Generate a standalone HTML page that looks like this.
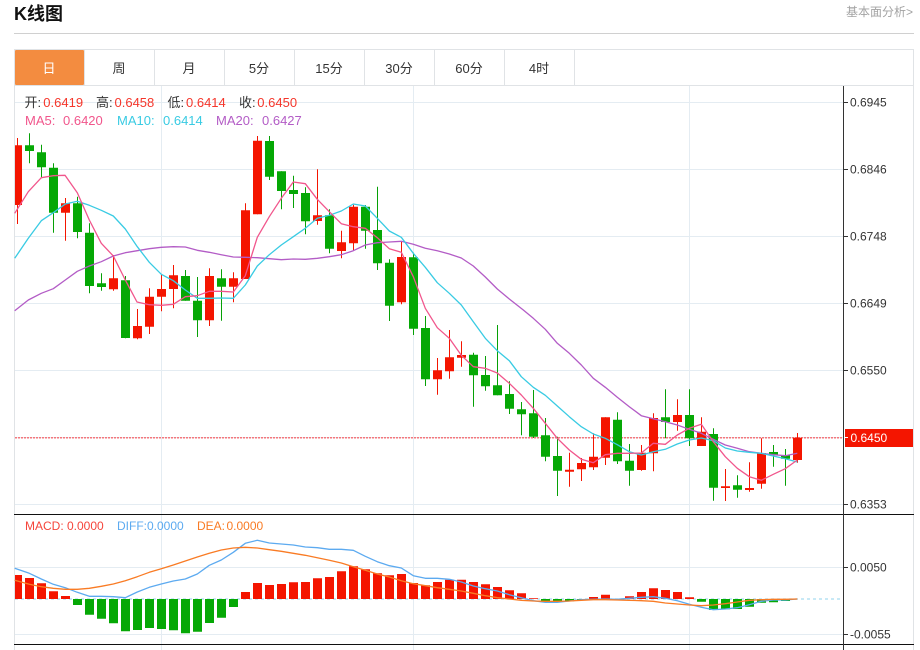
<!DOCTYPE html>
<html lang="zh">
<head>
<meta charset="utf-8">
<title>K线图</title>
<style>
html,body{margin:0;padding:0;background:#fff;width:920px;height:650px;overflow:hidden}
svg{display:block}
text{font-family:"Liberation Sans","Noto Sans CJK SC",sans-serif}
</style>
</head>
<body>
<svg width="920" height="650" viewBox="0 0 920 650" xmlns="http://www.w3.org/2000/svg">
<rect width="920" height="650" fill="#fff"/>
<!-- header -->
<text x="14" y="20" font-size="18" font-weight="bold" fill="#111">K线图</text>
<text x="846" y="16" font-size="12" fill="#a3a3a3">基本面分析&gt;</text>
<path d="M14 33.500H914" stroke="#d0d0d0" stroke-width="1"/>
<!-- frame -->
<path d="M14.500 50V650M913.500 50V650M14 49.500H914M14 85.500H914" stroke="#e0e3e6" stroke-width="1" fill="none"/>
<!-- tabs -->
<rect x="15" y="50" width="69" height="35" rx="1" fill="#f38c40"/>
<path d="M84.500 50V85M154.500 50V85M224.500 50V85M294.500 50V85M364.500 50V85M434.500 50V85M504.500 50V85M574.500 50V85" stroke="#e0e3e6" stroke-width="1"/>
<g font-size="13" text-anchor="middle" fill="#333">
<text x="49" y="73" fill="#fff">日</text>
<text x="119" y="73">周</text>
<text x="189" y="73">月</text>
<text x="259" y="73">5分</text>
<text x="329" y="73">15分</text>
<text x="399" y="73">30分</text>
<text x="469" y="73">60分</text>
<text x="539" y="73">4时</text>
</g>
<!-- grid -->
<path d="M15 102.500H843M15 169.500H843M15 236.500H843M15 303.500H843M15 370.500H843M15 437.500H843M15 504.500H843M15 567.500H843M15 634.500H843M161.500 86V650M413.500 86V650M689.500 86V650" stroke="#e4ecf2" stroke-width="1" fill="none"/>
<!-- price line -->
<path d="M15 437.700H843" stroke="#f4777c" stroke-width="1.500" stroke-dasharray="2 1" fill="none"/>
<!-- wicks -->
<path fill="none" stroke="#f41500" stroke-width="1" d="M17.500 138V224M65.500 198V240.700M113.500 255V290.700M137.500 309V339.300M149.500 288.300V334M161.500 275V311.300M173.500 265V308.300M209.500 268.300V326M233.500 272.300V302.300M245.500 203.300V279M257.500 136V214.300M317.500 169.300V224.700M341.500 230.700V258.300M353.500 204.700V250.700M401.500 241.700V304.300M437.500 358V394.700M449.500 330V378.700M461.500 341.300V366.700M569.500 452.700V486.700M581.500 458V481M593.500 433.300V470M605.500 417.300V465M641.500 445V470.700M653.500 413.300V471.300M677.500 399.300V430.700M701.500 417.300V446M725.500 469V501M749.500 462.300V491.700M761.500 438.300V488.700M797.500 433V462.700"/>
<path fill="none" stroke="#06a106" stroke-width="1" d="M29.500 133.300V163.300M41.500 144.700V177M53.500 163.300V232.700M77.500 196.700V238.300M89.500 223.300V293.300M101.500 273.300V290.700M125.500 276V338.300M185.500 270V300.700M197.500 277V337M221.500 269.300V320.700M269.500 136V180M281.500 171.300V209.300M293.500 175.700V208M305.500 187.300V234.300M329.500 209.300V253.300M365.500 205V248.700M377.500 186.700V270M389.500 259.300V321M413.500 252.700V335M425.500 316V386M473.500 352.700V406.700M485.500 356V390.700M497.500 325V395.300M509.500 381.300V414M521.500 402V435.300M533.500 390V438M545.500 418V461.300M557.500 436.700V496M617.500 412.300V464M629.500 444V485.700M665.500 389.300V438.300M689.500 389.300V446M713.500 428.300V500.700M737.500 475.300V497.700M773.500 445V466.700M785.500 449V485.700"/>
<!-- bodies -->
<path fill="#f41500" d="M15 145.300H22V205H15zM61 203.300h9V212.700h-9zM109 278.300h9V289.300h-9zM133 326h9V338.300h-9zM145 296.700h9V326.700h-9zM157 289h9V296.700h-9zM169 275.300h9V289h-9zM205 276h9V320.300h-9zM229 278.300h9V286.700h-9zM241 210.300h9V279h-9zM253 140.700h9V214.300h-9zM313 215.300h9V221h-9zM337 242.300h9V251h-9zM349 206.700h9V243.300h-9zM397 257h9V302.300h-9zM433 370.300h9V379.300h-9zM445 357.300h9V371.300h-9zM457 355h9V357.700h-9zM565 469.700h9V471.700h-9zM577 463h9V469.300h-9zM589 456.700h9V467.300h-9zM601 417.300h9V457.700h-9zM637 452.700h9V470h-9zM649 418h9V453.300h-9zM673 415h9V422h-9zM697 431.700h9V446h-9zM721 486.300h9V488h-9zM745 488h9V490h-9zM757 453h9V483.700h-9zM793 437.700h9V460h-9z"/>
<path fill="#05a805" d="M25 145.300h9V151h-9zM37 152.300h9V167.300h-9zM49 167.700h9V212.700h-9zM73 203.300h9V232h-9zM85 232.700h9V286h-9zM97 283.300h9V287h-9zM121 280.300h9V338h-9zM181 276h9V300.700h-9zM193 300.700h9V320.300h-9zM217 278.300h9V286.700h-9zM265 141h9V176.700h-9zM277 171.300h9V191h-9zM289 190h9V194h-9zM301 193h9V221.300h-9zM325 215.300h9V248.700h-9zM361 206.700h9V230.700h-9zM373 230h9V263.300h-9zM385 262.700h9V305.700h-9zM409 257.300h9V328.700h-9zM421 328h9V379.300h-9zM469 354.700h9V375.300h-9zM481 375h9V386.300h-9zM493 385.300h9V395.300h-9zM505 394h9V408.700h-9zM517 409.300h9V414.300h-9zM529 413.300h9V436.700h-9zM541 435.300h9V456.700h-9zM553 456h9V470.700h-9zM613 419.700h9V461.300h-9zM625 460.700h9V470.700h-9zM661 417.300h9V422h-9zM685 415h9V438.300h-9zM709 434h9V487.700h-9zM733 485.300h9V489.700h-9zM769 452h9V455h-9zM781 455h9V458.700h-9z"/>
<!-- MA lines -->
<g fill="none" stroke-width="1.300" stroke-linejoin="round">
<polyline stroke="#b35cc6" points="14.700,310.700 28.300,300 41.300,293.300 53.300,288.700 65.300,280 77.300,271.300 89.300,266 101.300,261.700 113.300,256 125.300,252.700 137.300,250.700 149.300,248.700 161.300,247.300 173.300,246.700 185.300,247 197.300,250.300 209.300,252.300 221.300,254.700 233.300,257 245.300,257.300 257.300,257.700 269.300,258.700 281.300,259.700 293.300,259 305.300,259.300 317.300,258.300 329.300,256.700 341.300,254.700 353.300,250.700 365.300,245 377.300,242.700 389.300,242 401.300,241.300 413.300,244.300 425.300,248.300 437.300,250.700 449.300,254 461.300,258 473.300,266 485.300,277 497.300,289 509.300,299 523.300,310 533.300,318.300 545.300,329.300 557.300,343.300 569.300,353.300 581.300,365 593.300,378.300 605.300,387.300 617.300,397.300 629.300,406.700 641.300,415.700 653.300,418.700 665.300,421.700 677.300,425 689.300,429.300 701.300,433.300 713.300,439.300 725.300,445 737.300,448.300 749.300,451.700 761.300,453.300 773.300,454.700 785.300,455.700 797.300,453.300"/>
<polyline stroke="#39cbe3" points="14.700,258.300 28.300,238.300 41.300,220.700 53.300,212.700 65.300,204 77.300,201.300 89.300,205.300 101.300,210.300 113.300,216 125.300,229 137.300,246.700 149.300,262.300 161.300,274.300 173.300,280.700 185.300,290 197.300,298.300 209.300,298.300 221.300,298 233.300,298.300 245.300,285 257.300,266 269.300,254.700 281.300,245 293.300,236.700 305.300,228.300 317.300,218.300 329.300,215.300 341.300,211 353.300,204 365.300,206 377.300,218.300 389.300,231 401.300,237.300 413.300,253.300 425.300,267.300 437.300,282.700 449.300,293.300 461.300,305 473.300,321.700 485.300,338.300 497.300,350.700 509.300,360.700 521.300,376.700 533.300,387.300 545.300,395.300 557.300,406 569.300,416.700 581.300,426.700 593.300,434 605.300,438.300 617.300,444.700 629.300,451.700 641.300,455 653.300,451.700 665.300,449.300 677.300,444 689.300,440 701.300,438 713.300,440.700 725.300,448 737.300,451 749.300,452.300 761.300,453.300 773.300,456 785.300,458.700 797.300,462"/>
<polyline stroke="#f1568c" points="14.700,213.300 28.300,191.700 41.300,177.700 53.300,175.700 65,175.300 77.300,192.700 89.300,220 101.300,243.300 113.300,256 125.300,280 137,302 149.300,304.700 161.300,305.300 173.300,304.300 185.300,296.700 197.300,295.700 209.300,291.300 221.300,291.300 233.300,292 245.300,275.700 257.300,237.300 269.300,216.700 281.300,198.300 293.300,182 305.300,183.700 317.300,199.300 329.300,211.700 341.300,223.700 353.300,226.700 365.300,228.300 377.300,237.700 389.300,248.700 401.300,252.300 413.300,276.700 425.300,308.300 437.300,327.700 449.300,338.300 461.300,355.300 473.300,366.700 485.300,368.300 497.300,373 509.300,383.300 521.300,395 533.300,408.300 545.300,423.300 557.300,438.300 569.300,450 581.300,459.300 593.300,462.700 605.300,454.700 617.300,453.300 629.300,453.300 641.300,453 653.300,443.300 665.300,444.300 677.300,435 689.300,428.300 701.300,424.300 713.300,441.700 725.300,456.700 737.300,468.300 749.300,476.700 761.300,480.300 773.300,474.300 785.300,468.700 797.300,460"/>
</g>
<!-- legends -->
<g font-size="13">
<text x="24.500" y="107" fill="#333">开:</text><text x="43.300" y="107" fill="#f5362b">0.6419</text>
<text x="96" y="107" fill="#333">高:</text><text x="114.500" y="107" fill="#f5362b">0.6458</text>
<text x="167.500" y="107" fill="#333">低:</text><text x="186" y="107" fill="#f5362b">0.6414</text>
<text x="239" y="107" fill="#333">收:</text><text x="257.300" y="107" fill="#f5362b">0.6450</text>
<text x="25" y="125" fill="#f1568c">MA5:</text><text x="63" y="125" fill="#f1568c">0.6420</text>
<text x="117" y="125" fill="#39cbe3">MA10:</text><text x="163" y="125" fill="#39cbe3">0.6414</text>
<text x="216" y="125" fill="#b35cc6">MA20:</text><text x="262" y="125" fill="#b35cc6">0.6427</text>
</g>
<!-- axis -->
<path d="M14 514.500H914M14 644.500H914" stroke="#111" stroke-width="1"/>
<path d="M843.500 86V650" stroke="#333" stroke-width="1"/>
<path d="M844 102.500h4M844 169.500h4M844 236.500h4M844 303.500h4M844 370.500h4M844 504.500h4M844 567.500h4M844 634.500h4" stroke="#333" stroke-width="1"/>
<g font-size="12" fill="#333">
<text x="850" y="106.500">0.6945</text>
<text x="850" y="173.500">0.6846</text>
<text x="850" y="240.500">0.6748</text>
<text x="850" y="307.500">0.6649</text>
<text x="850" y="374.500">0.6550</text>
<text x="850" y="508.500">0.6353</text>
<text x="850" y="571.500">0.0050</text>
<text x="850" y="638.500">-0.0055</text>
</g>
<rect x="845" y="429" width="68" height="18" fill="#f41500"/>
<path d="M844 437.500h4" stroke="#fff" stroke-width="1"/>
<text x="850.500" y="442" font-size="12" fill="#fff">0.6450</text>
<!-- MACD -->
<path d="M15 599H843" stroke="#a8dcf0" stroke-width="1.300" stroke-dasharray="3 3" fill="none"/>
<path fill="#f41500" d="M15 575H22V599H15zM25 578h9V599h-9zM37 583.300h9V599h-9zM49 591.300h9V599h-9zM61 596h9V599h-9zM241 592h9V599h-9zM253 583h9V599h-9zM265 585h9V599h-9zM277 584h9V599h-9zM289 582.300h9V599h-9zM301 582h9V599h-9zM313 578.300h9V599h-9zM325 577h9V599h-9zM337 571.300h9V599h-9zM349 566.300h9V599h-9zM361 569.300h9V599h-9zM373 573.300h9V599h-9zM385 575.300h9V599h-9zM397 574h9V599h-9zM409 583h9V599h-9zM421 585.300h9V599h-9zM433 582h9V599h-9zM445 579.700h9V599h-9zM457 579.700h9V599h-9zM469 582h9V599h-9zM481 584.300h9V599h-9zM493 587h9V599h-9zM505 590.300h9V599h-9zM517 593.300h9V599h-9zM529 598.300h9V599h-9zM589 597h9V599h-9zM601 594.700h9V599h-9zM625 596.300h9V599h-9zM637 592h9V599h-9zM649 588.300h9V599h-9zM661 590h9V599h-9zM673 592h9V599h-9zM685 597.300h9V599h-9z"/>
<path fill="#05a805" d="M73 599h9V605h-9zM85 599h9V614.700h-9zM97 599h9V618.700h-9zM109 599h9V623.300h-9zM121 599h9V631.300h-9zM133 599h9V630h-9zM145 599h9V628h-9zM157 599h9V629h-9zM169 599h9V630.300h-9zM181 599h9V633.300h-9zM193 599h9V631.700h-9zM205 599h9V623h-9zM217 599h9V617.700h-9zM229 599h9V607h-9zM541 599h9V601.300h-9zM553 599h9V602h-9zM565 599h9V601.300h-9zM577 599h9V600h-9zM697 599h9V601.700h-9zM709 599h9V610h-9zM721 599h9V609.300h-9zM733 599h9V609h-9zM745 599h9V606.700h-9zM757 599h9V602.700h-9zM769 599h9V602.300h-9zM781 599h9V601h-9z"/>
<g fill="none" stroke-width="1.300" stroke-linejoin="round">
<polyline stroke="#5caaf0" points="14.700,568.300 29.300,573.300 41.300,579 53.300,584.300 65.300,587.700 77.300,592.300 89.300,596.300 101.300,596.300 113.300,596.700 125.300,597.700 137.300,592 149.300,587.300 161.300,584 173.300,581 185.300,579 197.300,574 209.300,565.300 221.300,560 233.300,552.300 245.300,543.300 257.300,540.300 269.300,543 281.300,544 293.300,545 305.300,547 317.300,547.700 329.300,549.300 341.300,549.300 353.300,550.300 365.300,556.300 377.300,561.700 389.300,565.700 401.300,568 413.300,575.700 425.300,578.300 437.300,578.300 449.300,579.300 461.300,582 473.300,586 485.300,588.700 497.300,591 509.300,594.700 521.300,597.700 533.300,600.700 545.300,602.300 557.300,602.300 569.300,601 581.300,599.700 593.300,599.300 605.300,599 617.300,599.300 629.300,598.300 641.300,597.300 653.300,596.700 665.300,598.300 677.300,600.700 689.300,604.300 701.300,607.300 713.300,609.700 725.300,609 737.300,607.700 749.300,604.700 761.300,601.300 773.300,600 785.300,600 797.300,599"/>
<polyline stroke="#f97b24" points="14.700,580.300 29.300,584.300 41.300,586.700 53.300,588.300 65.300,589.300 77.300,589.300 89.300,588.300 101.300,586.300 113.300,584 125.300,580.700 137.300,576.700 149.300,572.300 161.300,568.700 173.300,565 185.300,561 197.300,557 209.300,553.300 221.300,550 233.300,548 245.300,547.300 257.300,548 269.300,549.700 281.300,551.300 293.300,553.300 305.300,555.300 317.300,557.700 329.300,560.300 341.300,563 353.300,566.700 365.300,570.300 377.300,574 389.300,577 401.300,580.700 413.300,583.700 425.300,585.700 437.300,587.700 449.300,589.300 461.300,591 473.300,593.300 485.300,595.700 497.300,597.700 509.300,599 521.300,600.300 533.300,601 545.300,601.300 557.300,601.300 569.300,601 581.300,600.300 593.300,599.700 605.300,599.700 617.300,600 629.300,600.300 641.300,600.700 653.300,601.300 665.300,603 677.300,604 689.300,605 701.300,605.700 713.300,605 725.300,603.700 737.300,602 749.300,600.300 761.300,599.700 773.300,599.300 785.300,599.300 797.300,599"/>
</g>
<g font-size="12">
<text x="25" y="530" fill="#f5453b">MACD:</text><text x="67" y="530" fill="#f5453b">0.0000</text>
<text x="117" y="530" fill="#5caaf0">DIFF:</text><text x="147" y="530" fill="#5caaf0">0.0000</text>
<text x="197" y="530" fill="#f97b24">DEA:</text><text x="226.500" y="530" fill="#f97b24">0.0000</text>
</g>
</svg>
</body>
</html>
